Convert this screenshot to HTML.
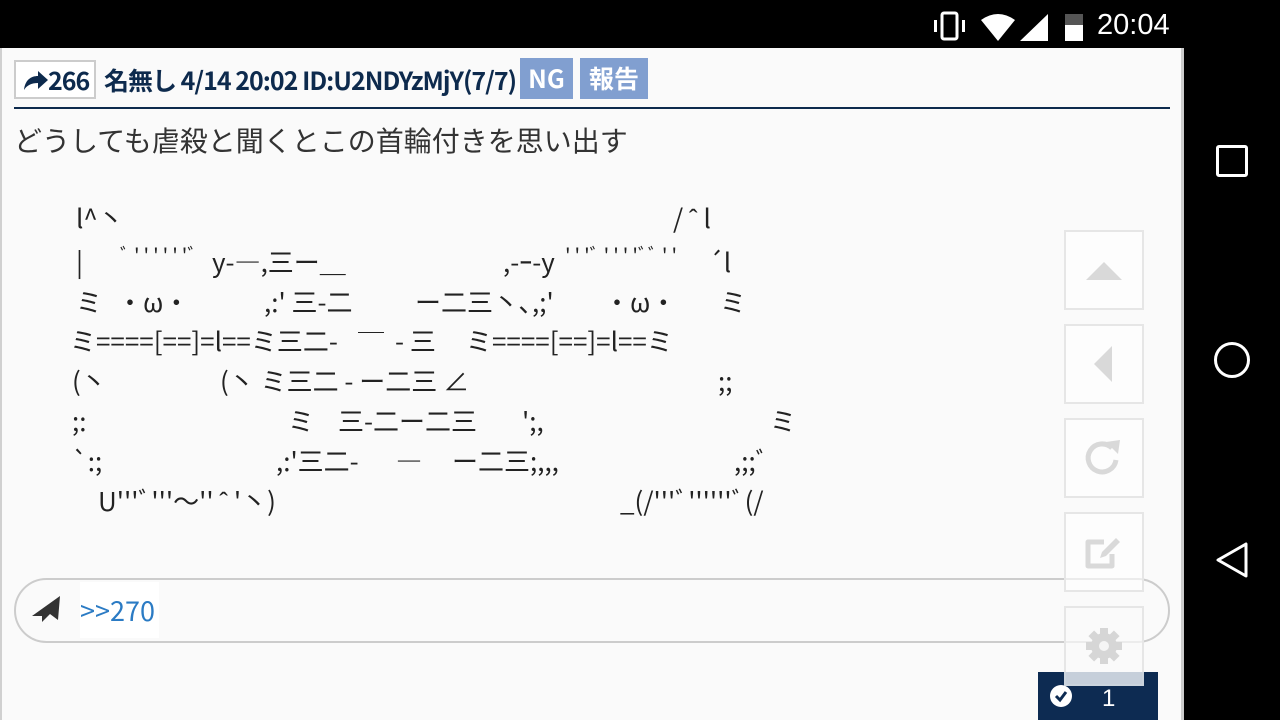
<!DOCTYPE html>
<html><head><meta charset="utf-8"><style>
*{margin:0;padding:0;box-sizing:border-box}
body{width:1280px;height:720px;overflow:hidden;background:#000;position:relative;font-family:"Liberation Sans","Noto Sans CJK JP",sans-serif}
#content{position:absolute;left:0;top:48px;width:1184px;height:672px;background:#fafafa;border-left:2px solid #d0d0d0;border-right:3px solid #ccc}
.a{position:absolute}
.hd{color:#0d2a4d;font-family:"Noto Sans CJK JP",sans-serif;font-weight:bold;font-size:25px;letter-spacing:-1px}
.aa{position:absolute;white-space:pre;font-family:"Noto Sans CJK JP",sans-serif;font-size:26px;color:#222;line-height:30px}
.q{letter-spacing:4px;font-size:20px}
.btn{position:absolute;left:1062px;width:80px;height:80px;border:2px solid #e6e6e6;background:rgba(255,255,255,0.6)}
</style></head><body>
<!-- status bar -->
<svg class="a" style="left:930px;top:10px" width="240" height="34">
<rect x="12" y="3" width="15" height="26" rx="2" fill="none" stroke="#fff" stroke-width="3"/>
<rect x="4" y="10" width="3" height="12" fill="#fff"/><rect x="32" y="10" width="3" height="12" fill="#fff"/>
<path d="M51 10 Q68 -2 85 10 L68 31 Z" fill="#fff"/>
<path d="M90 31 L118 4 L118 31 Z" fill="#fff"/>
<rect x="135" y="4" width="18" height="27" fill="#fff"/><rect x="135" y="4" width="18" height="11" fill="#555"/>
</svg>
<div class="a" style="left:1097px;top:9px;color:#fff;font-size:29px;font-family:'Liberation Sans',sans-serif">20:04</div>
<!-- nav -->
<div class="a" style="left:1216px;top:145px;width:32px;height:32px;border:3px solid #fff;border-radius:3px"></div>
<div class="a" style="left:1214px;top:342px;width:36px;height:36px;border:3px solid #fff;border-radius:50%"></div>
<svg class="a" style="left:1212px;top:540px" width="40" height="40"><path d="M6 20 L34 4 L34 36 Z" fill="none" stroke="#fff" stroke-width="3" stroke-linejoin="round"/></svg>

<div id="content">
<div class="a" style="left:12px;top:12px;width:82px;height:39px;border:2px solid #ccc;background:#fff"></div>
<svg class="a" style="left:20px;top:22px" width="28" height="22"><path d="M2 20 C3 10 9 6 16 6 L16 1 L26 10 L16 19 L16 13 C10 13 5 15 2 20Z" fill="#0d2a4d"/></svg>
<div class="a hd" style="left:46px;top:14px">266</div>
<div class="a hd" style="left:102px;top:14px">名無し 4/14 20:02 ID:U2NDYzMjY(7/7)</div>
<div class="a" style="left:518px;top:10px;width:53px;height:41px;background:#819fd0;color:#fff;font-weight:bold;font-size:25px;text-align:center;line-height:41px;font-family:'Noto Sans CJK JP',sans-serif">NG</div>
<div class="a" style="left:578px;top:10px;width:68px;height:41px;background:#819fd0;color:#fff;font-weight:bold;font-size:25px;text-align:center;line-height:41px;font-family:'Noto Sans CJK JP',sans-serif">報告</div>
<div class="a" style="left:12px;top:59px;width:1156px;height:2px;background:#0d2a4d"></div>
<div class="a" style="left:12px;top:72px;font-size:28px;color:#333;font-family:'Noto Sans CJK JP',sans-serif">どうしても虐殺と聞くとこの首輪付きを思い出す</div>

<div style="position:absolute;left:-2px;top:-48px">
<div class="aa" style="left:76px;top:203px">l^丶</div><div class="aa" style="left:673px;top:203px">/ ˆ l</div>
<div class="aa" style="left:76px;top:247px">|</div><div class="aa q" style="left:120px;top:240px">ﾞ''''''ﾞ</div><div class="aa" style="left:212px;top:247px">y-―,三ー＿</div><div class="aa" style="left:503px;top:247px">,-ｰ-y</div><div class="aa q" style="left:565px;top:240px">'''ﾞ''''ﾞﾞ''</div><div class="aa" style="left:708px;top:247px">´l</div>
<div class="aa" style="left:76px;top:287px">ミ</div><div class="aa" style="left:117px;top:287px">・ω・</div><div class="aa" style="left:264px;top:287px">,:' 三-二</div><div class="aa" style="left:415px;top:287px">ー二三丶､,;'</div><div class="aa" style="left:604px;top:287px">・ω・</div><div class="aa" style="left:720px;top:287px">ミ</div>
<div class="aa" style="left:70px;top:326px">ミ====[==]=l==ミ三二-</div><div class="aa" style="left:358px;top:330px">￣</div><div class="aa" style="left:395px;top:326px">- 三</div><div class="aa" style="left:466px;top:326px">ミ====[==]=l==ミ</div>
<div class="aa" style="left:72px;top:366px">(丶</div><div class="aa" style="left:220px;top:366px">(丶 ミ三二 - ー二三 ∠</div><div class="aa" style="left:718px;top:366px">;;</div>
<div class="aa" style="left:72px;top:406px">;:</div><div class="aa" style="left:288px;top:406px">ミ</div><div class="aa" style="left:338px;top:406px">三-二ー二三</div><div class="aa" style="left:522px;top:406px">';,</div><div class="aa" style="left:770px;top:406px">ミ</div>
<div class="aa" style="left:72px;top:446px">`:;</div><div class="aa" style="left:276px;top:446px">,:'三二-</div><div class="aa" style="left:396px;top:446px">―</div><div class="aa" style="left:452px;top:446px">ー二三;,,,</div><div class="aa" style="left:734px;top:446px">,;;ﾞ</div>
<div class="aa" style="left:98px;top:486px">U'''ﾞ'''～'' ˆ '丶)</div><div class="aa" style="left:620px;top:486px">_(/'''ﾞ''''''ﾞ(/</div>
</div>

<div class="a" style="left:12px;top:530px;width:1156px;height:65px;border:2px solid #ccc;border-radius:33px"></div>
<svg class="a" style="left:28px;top:546px" width="32" height="30"><path d="M2 22 L30 2 L28 26 L20 20 L12 28 L12 22 Z" fill="#333"/></svg>
<div class="a" style="left:78px;top:534px;width:79px;height:56px;background:#fff;color:#2b7bc4;font-size:27px;line-height:56px;font-family:'Noto Sans CJK JP',sans-serif">>>270</div>

<div class="a" style="left:1036px;top:624px;width:120px;height:48px;background:#0d2b52"></div>
<div class="a" style="left:1048px;top:637px;width:22px;height:22px;border-radius:50%;background:#fff"></div>
<svg class="a" style="left:1050px;top:640px" width="18" height="16"><path d="M4 8 L8 12 L14 4" fill="none" stroke="#0d2b52" stroke-width="3"/></svg>
<div class="a" style="left:1100px;top:637px;color:#fff;font-size:24px">1</div>

<div class="btn" style="top:182px"></div>
<svg class="a" style="left:1082px;top:210px" width="40" height="24"><path d="M2 22 L20 4 L38 22Z" fill="#d9d9d9"/></svg>
<div class="btn" style="top:276px"></div>
<svg class="a" style="left:1090px;top:296px" width="24" height="40"><path d="M20 2 L2 20 L20 38Z" fill="#d9d9d9"/></svg>
<div class="btn" style="top:370px"></div>
<svg class="a" style="left:1080px;top:388px" width="44" height="44"><path d="M30 12 A14 14 0 1 0 34 24" fill="none" stroke="#d9d9d9" stroke-width="5"/><path d="M24 6 L38 4 L36 18Z" fill="#d9d9d9"/></svg>
<div class="btn" style="top:464px"></div>
<svg class="a" style="left:1080px;top:484px" width="44" height="42"><path d="M22 10 L6 10 L6 34 L30 34 L30 22" fill="none" stroke="#d9d9d9" stroke-width="5" stroke-linejoin="round"/><path d="M18 26 L20 20 L34 6 L38 10 L24 24Z" fill="#d9d9d9"/></svg>
<div class="btn" style="top:558px;background:rgba(250,250,250,0.7)"></div>
<svg class="a" style="left:1082px;top:578px" width="40" height="40" viewBox="0 0 40 40"><g fill="#d6d6d6"><circle cx="20" cy="20" r="13"/><rect x="16" y="2" width="8" height="36"/><rect x="2" y="16" width="36" height="8"/><rect x="16" y="2" width="8" height="36" transform="rotate(45 20 20)"/><rect x="16" y="2" width="8" height="36" transform="rotate(-45 20 20)"/></g><circle cx="20" cy="20" r="5" fill="#f5f5f5"/></svg>
<div class="a" style="left:1062px;top:624px;width:80px;height:14px;background:rgba(200,210,220,0.9)"></div>
</div>
</body></html>
